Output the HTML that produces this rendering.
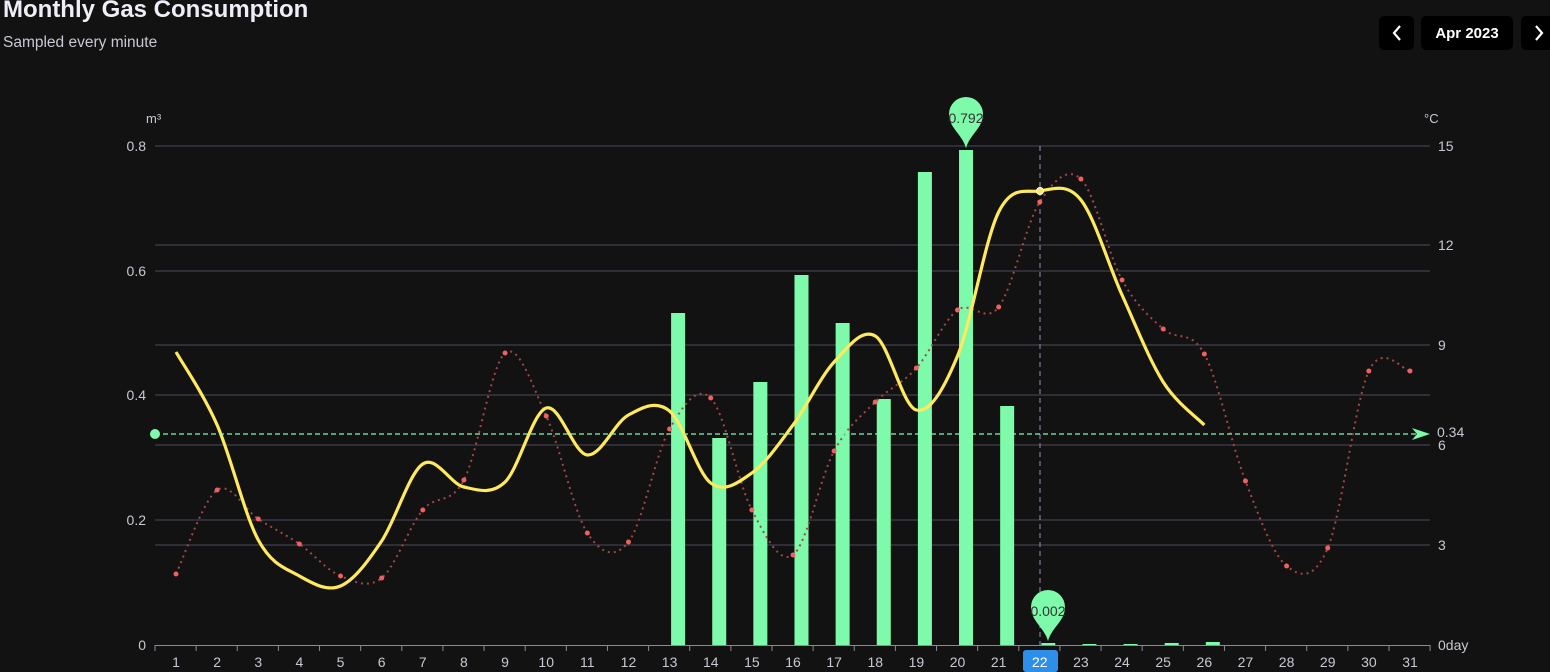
<!DOCTYPE html>
<html><head><meta charset="utf-8">
<style>
body{margin:0;width:1550px;height:672px;background:#121212;overflow:hidden;font-family:"Liberation Sans",sans-serif;position:relative}
.t{position:absolute;left:3px;top:-4px;color:#eeeef6;font-weight:bold;font-size:24px}
.s{position:absolute;left:3px;top:34px;color:#c8c8d4;font-size:15.5px}
.b{position:absolute;top:16px;height:34px;background:#000;border-radius:5px;color:#fff;font-weight:bold;font-size:15px;display:flex;align-items:center;justify-content:center}
svg{position:absolute;left:0;top:0}
</style></head><body>
<div class="t">Monthly Gas Consumption</div>
<div class="s">Sampled every minute</div>
<div class="b" style="left:1379px;width:35px"><svg style="position:static" width="12" height="18" viewBox="0 0 12 18"><path d="M9 2L3 9l6 7" stroke="#fff" stroke-width="2.2" fill="none"/></svg></div>
<div class="b" style="left:1421px;width:92px">Apr 2023</div>
<div class="b" style="left:1521px;width:40px;justify-content:flex-start;padding-left:12px;box-sizing:border-box"><svg style="position:static" width="12" height="18" viewBox="0 0 12 18"><path d="M3 2l6 7-6 7" stroke="#fff" stroke-width="2.2" fill="none"/></svg></div>
<svg id="c" width="1550" height="672" font-family="Liberation Sans, sans-serif"></svg>
<script>
var s='',X=function(d){return 176+(d-1)*41.133};
[146,271,395,520,245,345,445,545].forEach(function(y){s+='<line x1="155" x2="1430" y1="'+y+'" y2="'+y+'" stroke="#4c4a5c" stroke-width="1"/>'});
s+='<line x1="155" x2="1430" y1="645.5" y2="645.5" stroke="#8a8a98"/>';
for(var k=0;k<=31;k++){var x=155+k*41.133;s+='<line x1="'+x+'" x2="'+x+'" y1="645" y2="651" stroke="#8a8a98"/>';}
[['0.8',146],['0.6',271],['0.4',395],['0.2',520],['0',645]].forEach(function(a){s+='<text x="146" y="'+(a[1]+5)+'" fill="#c8c8d4" font-size="14" text-anchor="end">'+a[0]+'</text>'});
[['15',146],['12',245],['9',345],['6',445],['3',545],['0day',645]].forEach(function(a){s+='<text x="1438" y="'+(a[1]+5)+'" fill="#c8c8d4" font-size="14">'+a[0]+'</text>'});
s+='<text x="146" y="123" fill="#c8c8d4" font-size="13">m³</text><text x="1424" y="123" fill="#c8c8d4" font-size="13">°C</text>';
s+='<line x1="1040" x2="1040" y1="146" y2="645" stroke="#9a90b0" stroke-dasharray="5,4"/>';
var bars={13:313,14:438,15:382,16:275,17:323,18:399,19:172,20:150,21:406,22:643,23:644,24:644,25:643,26:642};
for(var d in bars){s+='<rect x="'+(X(+d)+1.5)+'" y="'+bars[d]+'" width="14" height="'+(645-bars[d])+'" fill="#7efbaa"/>';}
function sm(p){var r='M'+p[0][0]+','+p[0][1];for(var i=0;i<p.length-1;i++){var p0=p[i-1]||p[i],p1=p[i],p2=p[i+1],p3=p[i+2]||p2;r+=' C'+(p1[0]+(p2[0]-p0[0])/6)+','+(p1[1]+(p2[1]-p0[1])/6)+' '+(p2[0]-(p3[0]-p1[0])/6)+','+(p2[1]-(p3[1]-p1[1])/6)+' '+p2[0]+','+p2[1];}return r}
var red=[574,490,519,544,576,578,510,480,353,416,533,542,429,398,510,555,451,402,368,310,307,202,179,280,329,354,481,566,548,371,371].map(function(y,i){return[X(i+1),y]});
s+='<path d="'+sm(red)+'" fill="none" stroke="#a04848" stroke-width="2" stroke-dasharray="2,4"/>';
red.forEach(function(p){s+='<circle cx="'+p[0]+'" cy="'+p[1]+'" r="2.5" fill="#f06060"/>'});
var yl=[352,425,540,576,586,541,464,487,482,408,455,415,411,483,473,425,362,336,410,356,212,191,200,295,382,425].map(function(y,i){return[X(i+1),y]});
s+='<path d="'+sm(yl)+'" fill="none" stroke="#ffe95c" stroke-width="3.2"/>';
s+='<circle cx="1040" cy="191" r="3.5" fill="#ffe95c" stroke="#fff" stroke-width="1"/>';
s+='<line x1="155" x2="1425" y1="434" y2="434" stroke="#7efbaa" stroke-width="1.3" stroke-dasharray="5,3"/><circle cx="155" cy="434" r="5" fill="#7efbaa"/><path d="M1412 428l18 6-18 6 5-6z" fill="#7efbaa"/><text x="1437" y="437" fill="#c8c8d4" font-size="14">0.34</text>';
function pin(x,y,t){return '<path d="M'+x+','+y+' C'+(x-4)+','+(y-14)+' '+(x-17)+','+(y-20)+' '+(x-17)+','+(y-34)+' A17,17 0 1 1 '+(x+17)+','+(y-34)+' C'+(x+17)+','+(y-20)+' '+(x+4)+','+(y-14)+' '+x+','+y+'Z" fill="#7efbaa"/><text x="'+x+'" y="'+(y-25)+'" fill="#333" font-size="14" text-anchor="middle">'+t+'</text>';}
s+=pin(966,148,'0.792')+pin(1048,641,'0.002');
s+='<rect x="1023" y="650" width="35" height="22" rx="3" fill="#2d8fe8"/>';
for(var d=1;d<=31;d++)s+='<text x="'+X(d)+'" y="667" fill="'+(d==22?'#fff':'#c8c8d4')+'" font-size="14" text-anchor="middle">'+d+'</text>';
document.getElementById('c').innerHTML=s;
</script>
</body></html>
